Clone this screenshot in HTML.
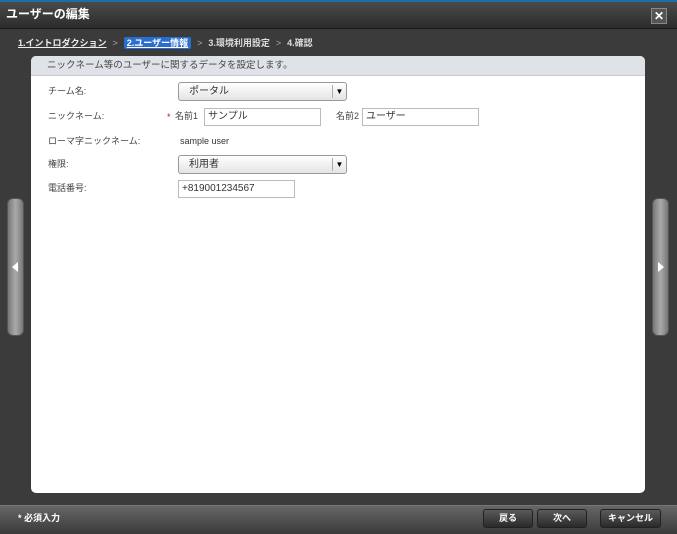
<!DOCTYPE html>
<html><head><meta charset="utf-8"><style>
*{box-sizing:border-box;margin:0;padding:0}
body{width:677px;height:534px;overflow:hidden;background:#3b3b3b;font-family:"Liberation Sans","Noto Sans CJK JP",sans-serif;font-size:10px;position:relative;line-height:1.2}
.abs{position:absolute}
#title{left:0;top:0;width:677px;height:29px;background:linear-gradient(#4a4a4a,#2c2c2c);border-top:2px solid #1d6fa8;border-bottom:1px solid #1a1a1a}
#title span{position:absolute;left:6px;top:5px;color:#fff;font-weight:bold;font-size:12px}
#close{left:651px;top:8px;width:16px;height:16px;background:#555;border:1px solid #888;color:#fff;font-size:12px;line-height:14px;text-align:center;font-weight:bold}
#steps{left:18px;top:38px;color:#ddd;font-size:9px;font-weight:bold;white-space:nowrap}
#steps u{color:#eee}
#steps .cur{background:#2a6fd0;color:#fff;padding:1px 3px;border-radius:2px;text-decoration:underline}
#steps .sep{color:#aaa;margin:0 6px;font-weight:normal}
#panel{left:31px;top:56px;width:614px;height:437px;background:#fff;border-radius:5px;overflow:hidden}
#ph{height:20px;background:#dfe3e7;border-bottom:1px solid #c8ccd0;color:#444;padding:0 0 0 16px;line-height:20px;font-size:9.5px}
.lbl{color:#444;font-size:9px}
.sel{height:19px;border:1px solid #999;border-radius:3px;background:linear-gradient(#fff,#e4e4e4);color:#333;padding:0 0 0 10px;line-height:17px}
.sel i{position:absolute;right:0;top:2px;width:14px;height:13px;border-left:1px solid #aaa;font-style:normal;font-size:8px;text-align:center;line-height:13px;color:#000}
.inp{height:18px;border:1px solid #bbb;background:#fff;color:#333;padding:0 0 0 3px;line-height:16px}
#foot{left:0;top:505px;width:677px;height:29px;background:linear-gradient(#666,#3a3a3a);border-top:1px solid #777}
.btn{top:509px;height:19px;border:1px solid #222;border-radius:3px;background:linear-gradient(#5a5a5a,#2a2a2a);color:#fff;font-weight:bold;font-size:9px;text-align:center;line-height:17px}
.tab{top:198px;width:17px;height:138px;border-radius:6px;background:linear-gradient(90deg,#777,#aaa 50%,#777);border:1px solid #555}
.tab b{position:absolute;top:63px;left:5px;width:0;height:0;border-top:5px solid transparent;border-bottom:5px solid transparent}
</style></head><body>
<div id="title" class="abs"><span>ユーザーの編集</span></div>
<div id="close" class="abs">✕</div>
<div id="steps" class="abs"><u>1.イントロダクション</u><span class="sep">&gt;</span><span class="cur">2.ユーザー情報</span><span class="sep">&gt;</span>3.環境利用設定<span class="sep">&gt;</span>4.確認</div>
<div class="abs tab" style="left:7px"><b style="border-right:6px solid #fff;left:4px"></b></div>
<div class="abs tab" style="left:652px"><b style="border-left:6px solid #fff;left:5px"></b></div>
<div id="panel" class="abs"><div id="ph">ニックネーム等のユーザーに関するデータを設定します。</div></div>
<div class="abs lbl" style="left:48px;top:86px">チーム名:</div>
<div class="abs sel" style="left:178px;top:82px;width:169px">ポータル<i>▼</i></div>
<div class="abs lbl" style="left:48px;top:111px">ニックネーム:</div>
<div class="abs" style="left:167px;top:112px;color:#c03;font-size:9px">*</div>
<div class="abs lbl" style="left:175px;top:111px">名前1</div>
<div class="abs inp" style="left:204px;top:108px;width:117px">サンプル</div>
<div class="abs lbl" style="left:336px;top:111px">名前2</div>
<div class="abs inp" style="left:362px;top:108px;width:117px">ユーザー</div>
<div class="abs lbl" style="left:48px;top:136px">ローマ字ニックネーム:</div>
<div class="abs" style="left:180px;top:136px;color:#333;font-size:9px">sample user</div>
<div class="abs lbl" style="left:48px;top:159px">権限:</div>
<div class="abs sel" style="left:178px;top:155px;width:169px">利用者<i>▼</i></div>
<div class="abs lbl" style="left:48px;top:183px">電話番号:</div>
<div class="abs inp" style="left:178px;top:180px;width:117px">+819001234567</div>
<div id="foot" class="abs"></div>
<div class="abs" style="left:18px;top:513px;color:#fff;font-size:9px;font-weight:bold">* 必須入力</div>
<div class="abs btn" style="left:483px;width:50px">戻る</div>
<div class="abs btn" style="left:537px;width:50px">次へ</div>
<div class="abs btn" style="left:600px;width:61px">キャンセル</div>
</body></html>
